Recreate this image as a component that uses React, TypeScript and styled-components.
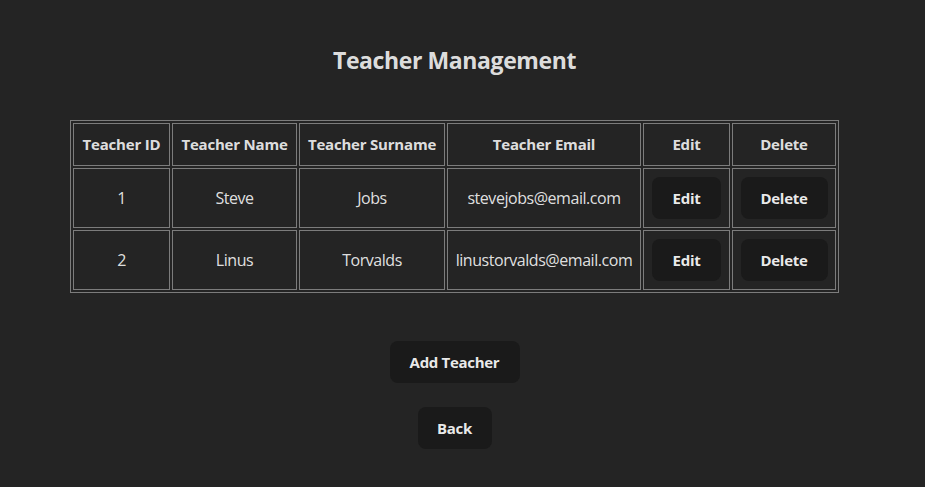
import React from "react";
import styled, { createGlobalStyle } from "styled-components";

const GlobalStyle = createGlobalStyle`
  html, body {
    margin: 0;
    padding: 0;
    background: #242424;
  }
  body {
    font-family: "Open Sans", "Noto Sans", sans-serif;
    color: rgba(255, 255, 255, 0.87);
    font-size: 16px;
    line-height: 1.5;
  }
`;

const Page = styled.div`
  display: flex;
  flex-direction: column;
  align-items: center;
  padding: 42px 16px 0 0;
  min-height: 487px;
  box-sizing: border-box;
`;

const Title = styled.h2`
  margin: 0 0 42px;
  font-size: 23px;
  line-height: 36px;
  font-weight: 700;
  letter-spacing: -0.4px;
`;

const Table = styled.table`
  border: 1px solid #7c7c7c;
  border-spacing: 2px;
  border-collapse: separate;
`;

const HeadCell = styled.th<{ $w: number }>`
  box-sizing: border-box;
  width: ${(p) => p.$w}px;
  height: 43px;
  padding: 0 6px;
  border: 1px solid #7c7c7c;
  font-size: 15px;
  font-weight: 700;
  text-align: center;
  letter-spacing: -0.2px;
  white-space: nowrap;
`;

const Cell = styled.td`
  box-sizing: border-box;
  height: 60px;
  padding: 0 6px;
  border: 1px solid #7c7c7c;
  font-size: 16px;
  text-align: center;
  letter-spacing: -0.45px;
  white-space: nowrap;
`;

const Button = styled.button<{ $w: number }>`
  box-sizing: border-box;
  width: ${(p) => p.$w}px;
  height: 42px;
  padding: 0;
  border: 1px solid transparent;
  border-radius: 8px;
  background: #1a1a1a;
  color: rgba(255, 255, 255, 0.92);
  font-family: "Open Sans", "Noto Sans", sans-serif;
  font-size: 15px;
  font-weight: 700;
  letter-spacing: -0.3px;
  cursor: pointer;
`;

const Actions = styled.div`
  display: flex;
  flex-direction: column;
  align-items: center;
  gap: 24px;
  margin-top: 48px;
`;

const columns = [
  { label: "Teacher ID", w: 97 },
  { label: "Teacher Name", w: 125 },
  { label: "Teacher Surname", w: 146 },
  { label: "Teacher Email", w: 194 },
  { label: "Edit", w: 87 },
  { label: "Delete", w: 104 },
];

const teachers = [
  { id: 1, name: "Steve", surname: "Jobs", email: "stevejobs@email.com" },
  { id: 2, name: "Linus", surname: "Torvalds", email: "linustorvalds@email.com" },
];

export default function App() {
  return (
    <>
      <GlobalStyle />
      <Page>
        <Title>Teacher Management</Title>
        <Table>
          <thead>
            <tr>
              {columns.map((c) => (
                <HeadCell key={c.label} $w={c.w}>
                  {c.label}
                </HeadCell>
              ))}
            </tr>
          </thead>
          <tbody>
            {teachers.map((t) => (
              <tr key={t.id}>
                <Cell>{t.id}</Cell>
                <Cell>{t.name}</Cell>
                <Cell>{t.surname}</Cell>
                <Cell>{t.email}</Cell>
                <Cell>
                  <Button $w={69}>Edit</Button>
                </Cell>
                <Cell>
                  <Button $w={87}>Delete</Button>
                </Cell>
              </tr>
            ))}
          </tbody>
        </Table>
        <Actions>
          <Button $w={130}>Add Teacher</Button>
          <Button $w={74}>Back</Button>
        </Actions>
      </Page>
    </>
  );
}
